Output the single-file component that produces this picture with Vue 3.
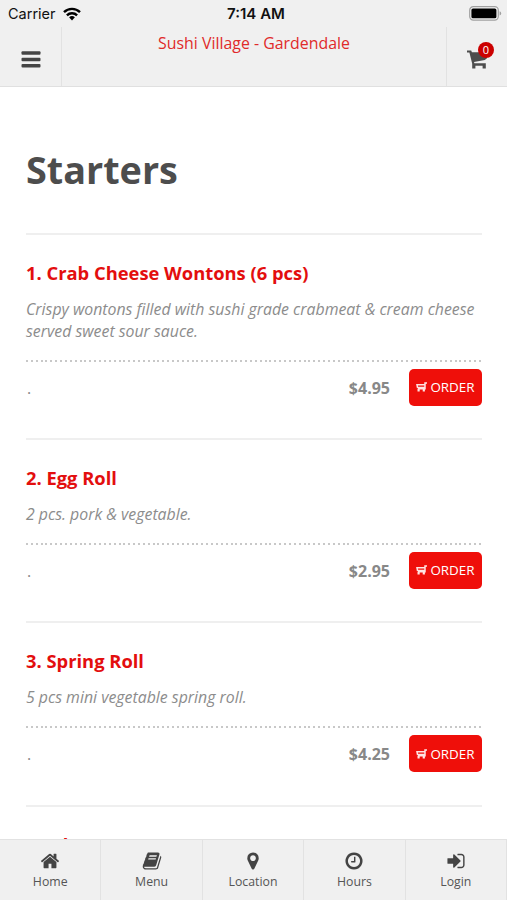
<script setup>
import { ref } from 'vue'

const cartCount = ref(0)

const items = [
  {
    name: '1. Crab Cheese Wontons (6 pcs)',
    desc: 'Crispy wontons filled with sushi grade crabmeat & cream cheese served sweet sour sauce.',
    price: '$4.95'
  },
  { name: '2. Egg Roll', desc: '2 pcs. pork & vegetable.', price: '$2.95' },
  { name: '3. Spring Roll', desc: '5 pcs mini vegetable spring roll.', price: '$4.25' },
  { name: '4. Edamame' }
]

const tabs = [
  {
    label: 'Home',
    path: 'M1472 992v480q0 26-19 45t-45 19h-384v-384h-256v384h-384q-26 0-45-19t-19-45v-480q0-1 .5-3t.5-3l575-474 575 474q1 2 1 6zm223-69l-62 74q-8 9-21 11h-3q-13 0-21-7l-692-577-692 577q-12 8-24 7-13-2-21-11l-62-74q-8-10-7-23.5t11-21.5l719-599q32-26 76-26t76 26l244 204v-195q0-14 9-23t23-9h192q14 0 23 9t9 23v408l219 182q10 8 11 21.5t-7 23.5z'
  },
  {
    label: 'Menu',
    path: 'M1703 478q40 57 18 129l-275 906q-19 64-76.5 107.5t-122.5 43.5h-923q-77 0-148.5-53.5t-99.5-131.5q-24-67-2-127 0-4 3-27t4-37q1-8-3-21.5t-3-19.5q2-11 8-21t16.5-23.5 16.5-23.5q23-38 45-91.5t30-91.5q3-10 .5-30t-.5-28q3-11 17-28t17-23q21-36 42-92t25-90q1-9-2.5-32t.5-28q4-13 22-30.5t22-22.5q19-26 42.5-84.5t27.5-96.5q1-8-3-25.5t-2-26.5q2-8 9-18t18-23 17-21q8-12 16.5-30.5t15-35 16-36 19.5-32 26.5-23.5 36-11.5 47.5 5.5l-1 3q38-9 51-9h761q74 0 114 56t18 130l-274 906q-36 119-71.5 153.5t-128.5 34.5h-869q-27 0-38 15-11 16-1 43 24 70 144 70h923q29 0 56-15.5t35-41.5l300-987q7-22 5-57 38 15 59 43zm-1064 2q-4 13 2 22.5t20 9.5h608q13 0 25.5-9.5t16.5-22.5l21-64q4-13-2-22.5t-20-9.5h-608q-13 0-25.5 9.5t-16.5 22.5zm-83 256q-4 13 2 22.5t20 9.5h608q13 0 25.5-9.5t16.5-22.5l21-64q4-13-2-22.5t-20-9.5h-608q-13 0-25.5 9.5t-16.5 22.5z'
  },
  {
    label: 'Location',
    path: 'M1152 640q0-106-75-181t-181-75-181 75-75 181 75 181 181 75 181-75 75-181zm256 0q0 109-33 179l-364 774q-16 33-47.5 52t-67.5 19-67.5-19-46.5-52l-365-774q-33-70-33-179 0-212 150-362t362-150 362 150 150 362z'
  },
  {
    label: 'Hours',
    path: 'M1024 544v448q0 14-9 23t-23 9h-320q-14 0-23-9t-9-23v-64q0-14 9-23t23-9h224v-352q0-14 9-23t23-9h64q14 0 23 9t9 23zm416 352q0-148-73-273t-198-198-273-73-273 73-198 198-73 273 73 273 198 198 273 73 273-73 198-198 73-273zm224 0q0 209-103 385.5t-279.5 279.5-385.5 103-385.5-103-279.5-279.5-103-385.5 103-385.5 279.5-279.5 385.5-103 385.5 103 279.5 279.5 103 385.5z'
  },
  {
    label: 'Login',
    path: 'M1312 896q0 26-19 45l-544 544q-19 19-45 19t-45-19-19-45v-288h-448q-26 0-45-19t-19-45v-384q0-26 19-45t45-19h448v-288q0-26 19-45t45-19 45 19l544 544q19 19 19 45zm352-352v704q0 119-84.5 203.5t-203.5 84.5h-320q-13 0-22.5-9.5t-9.5-22.5q0-4-1-20t-.5-26.5 3-23.5 10-19.5 20.5-6.5h320q66 0 113-47t47-113v-704q0-66-47-113t-113-47h-312l-11.5-1-11.5-3-8-5.5-7-9-2-13.5q0-4-1-20t-.5-26.5 3-23.5 10-19.5 20.5-6.5h320q119 0 203.5 84.5t84.5 203.5z'
  }
]

function addToCart() {
  cartCount.value++
}
</script>

<template>
  <div class="app">
    <div class="status-bar">
      <div class="carrier">
        Carrier
        <svg width="18" height="14" viewBox="0 0 18 14">
          <g fill="none" stroke="#000" stroke-width="2.4">
            <path d="M1 5.2a11.4 11.4 0 0 1 16 0" />
            <path d="M3.9 8.3a7.2 7.2 0 0 1 10.2 0" />
          </g>
          <path d="M9 13.4l-2.9-3.1a4.2 4.2 0 0 1 5.8 0z" />
        </svg>
      </div>
      <div class="time">7:14 AM</div>
      <div class="battery">
        <svg width="33" height="15" viewBox="0 0 33 15">
          <rect x="0.7" y="0.7" width="28.6" height="13.4" rx="3.6" fill="#f4f4f4" stroke="#a0a0a0" stroke-width="1.2" />
          <rect x="2.4" y="2.5" width="25" height="9.8" rx="1.6" />
          <path d="M30.6 5.2q1.6.6 1.6 2.2t-1.6 2.2z" fill="#a0a0a0" />
        </svg>
      </div>
    </div>

    <header class="header">
      <button class="header-btn menu-btn">
        <svg width="20" height="17" viewBox="0 0 20 17" fill="#444">
          <rect x="0.5" y="0.3" width="19" height="3.5" rx="1" />
          <rect x="0.5" y="6.7" width="19" height="3.5" rx="1" />
          <rect x="0.5" y="13.1" width="19" height="3.5" rx="1" />
        </svg>
      </button>
      <div class="brand">Sushi Village - Gardendale</div>
      <button class="header-btn cart-btn">
        <span class="cart">
          <svg width="20" height="19" viewBox="0 0 20 19">
            <path d="M0 .6h4.2l.7 1.7H20v6L17.8 10 7 11.9l.4 1.3h11.4v5.2h-3.2v-2.7H8.4v2.7H5.2v-4.6L2.4 2.5H0z" fill="#4d4d4d" />
          </svg>
          <span class="badge">{{ cartCount }}</span>
        </span>
      </button>
    </header>

    <main class="content">
      <h1>Starters</h1>
      <section class="item" v-for="item in items" :key="item.name">
        <h2>{{ item.name }}</h2>
        <p class="desc" v-if="item.desc">{{ item.desc }}</p>
        <div class="order-line" v-if="item.price">
          <span class="size">.</span>
          <span class="price">{{ item.price }}</span>
          <button class="order-btn" @click="addToCart()">
            <svg width="11" height="10" viewBox="0 0 11 10" fill="none" stroke="#ffe4e2">
              <path d="M11 1H9v5.8H2M9 2.8H1l.5 2.6H9" stroke-width="1.5" />
              <path d="M2.6 7v2.6M7.8 7v2.6" stroke-width="2.2" />
            </svg>
            ORDER
          </button>
        </div>
      </section>
    </main>

    <nav class="tab-bar">
      <a class="tab" v-for="tab in tabs" :key="tab.label">
        <svg width="20" height="20" viewBox="0 0 1792 1792"><path :d="tab.path" /></svg>
        <span>{{ tab.label }}</span>
      </a>
    </nav>
  </div>
</template>

<style>
body {
  margin: 0;
  overflow: hidden;
}
</style>

<style scoped>
.app {
  width: 507px;
  height: 900px;
  display: flex;
  flex-direction: column;
  overflow: hidden;
  background-color: #fff;
  font-family: 'Open Sans', sans-serif;
  color: #888;
}

.status-bar {
  flex: none;
  height: 27px;
  display: flex;
  align-items: center;
  background-color: #f0f0f0;
  font-family: Inter, sans-serif;
  font-size: 15px;
  line-height: 27px;
  color: #111;
}

.carrier,
.battery {
  flex: 1;
  display: flex;
  align-items: center;
}

.carrier {
  padding-left: 8px;
  gap: 7px;
  font-size: 14.5px;
}

.battery {
  justify-content: flex-end;
  padding-right: 5px;
}

.time {
  padding-left: 2px;
  font-weight: 600;
}

.header {
  flex: none;
  height: 60px;
  display: flex;
  background-color: #f0f0f0;
  border-bottom: 1px solid #e0e0e0;
  box-sizing: border-box;
}

button {
  border: 0;
  margin: 0;
  padding: 0;
  font-family: inherit;
}

.header-btn {
  width: 61px;
  display: flex;
  align-items: center;
  justify-content: center;
  background-color: transparent;
  box-sizing: border-box;
}

.menu-btn {
  width: 62px;
  border-right: 1px solid #e2e2e2;
  padding-top: 5px;
}

.cart-btn {
  border-left: 1px solid #e2e2e2;
  padding-top: 6px;
}

.cart {
  position: relative;
  display: flex;
}

.badge {
  position: absolute;
  left: 11px;
  top: -8px;
  width: 16px;
  height: 16px;
  border-radius: 50%;
  background-color: #cb0000;
  color: #fff;
  font-size: 11px;
  line-height: 16px;
  text-align: center;
}

.brand {
  flex: 1;
  padding-top: 5px;
  text-align: center;
  font-size: 15.9px;
  line-height: 22px;
  color: #e02a2a;
}

.content {
  flex: 1;
  min-height: 0;
  overflow: hidden;
  padding: 0 25px 0 26px;
}

h1 {
  margin: 0;
  padding: 55px 0 35px;
  font-size: 37.8px;
  line-height: 56px;
  font-weight: 700;
  color: #4d4d4d;
}

.item {
  border-top: 2px solid #efefef;
  padding: 25px 0 32.7px;
}

h2 {
  margin: 0 0 12px;
  font-size: 18.35px;
  line-height: 26px;
  font-weight: 700;
  color: #e30e0e;
}

.desc {
  margin: 0 0 17.5px;
  font-size: 15.85px;
  line-height: 22px;
  font-style: italic;
  color: #8c8c8c;
}

.order-line {
  display: flex;
  align-items: center;
  padding-top: 9.5px;
  background: repeating-linear-gradient(to right, #c8c8c8 0 2px, transparent 2px 4.87px) top left / 100% 2px no-repeat;
  font-size: 16px;
}

.size {
  flex: 1;
  padding: 1px 0 0 1px;
}

.price {
  margin-right: 19px;
  padding-top: 1px;
  font-weight: 700;
}

.order-btn {
  width: 73px;
  height: 36.5px;
  display: flex;
  align-items: center;
  justify-content: center;
  gap: 3px;
  border-radius: 5px;
  background-color: #ef0f0a;
  color: #fff;
  font-size: 13.4px;
}

.tab-bar {
  flex: none;
  height: 61px;
  display: flex;
  box-sizing: border-box;
  border-top: 1px solid #e2e2e2;
  background-color: #f0f0f0;
}

.tab {
  flex: 1;
  display: flex;
  flex-direction: column;
  align-items: center;
  gap: 2px;
  padding-top: 11px;
  border-right: 1px solid #e2e2e2;
  font-size: 12.3px;
  line-height: 18px;
  color: #555;
}

.tab svg {
  fill: #444;
}
</style>
